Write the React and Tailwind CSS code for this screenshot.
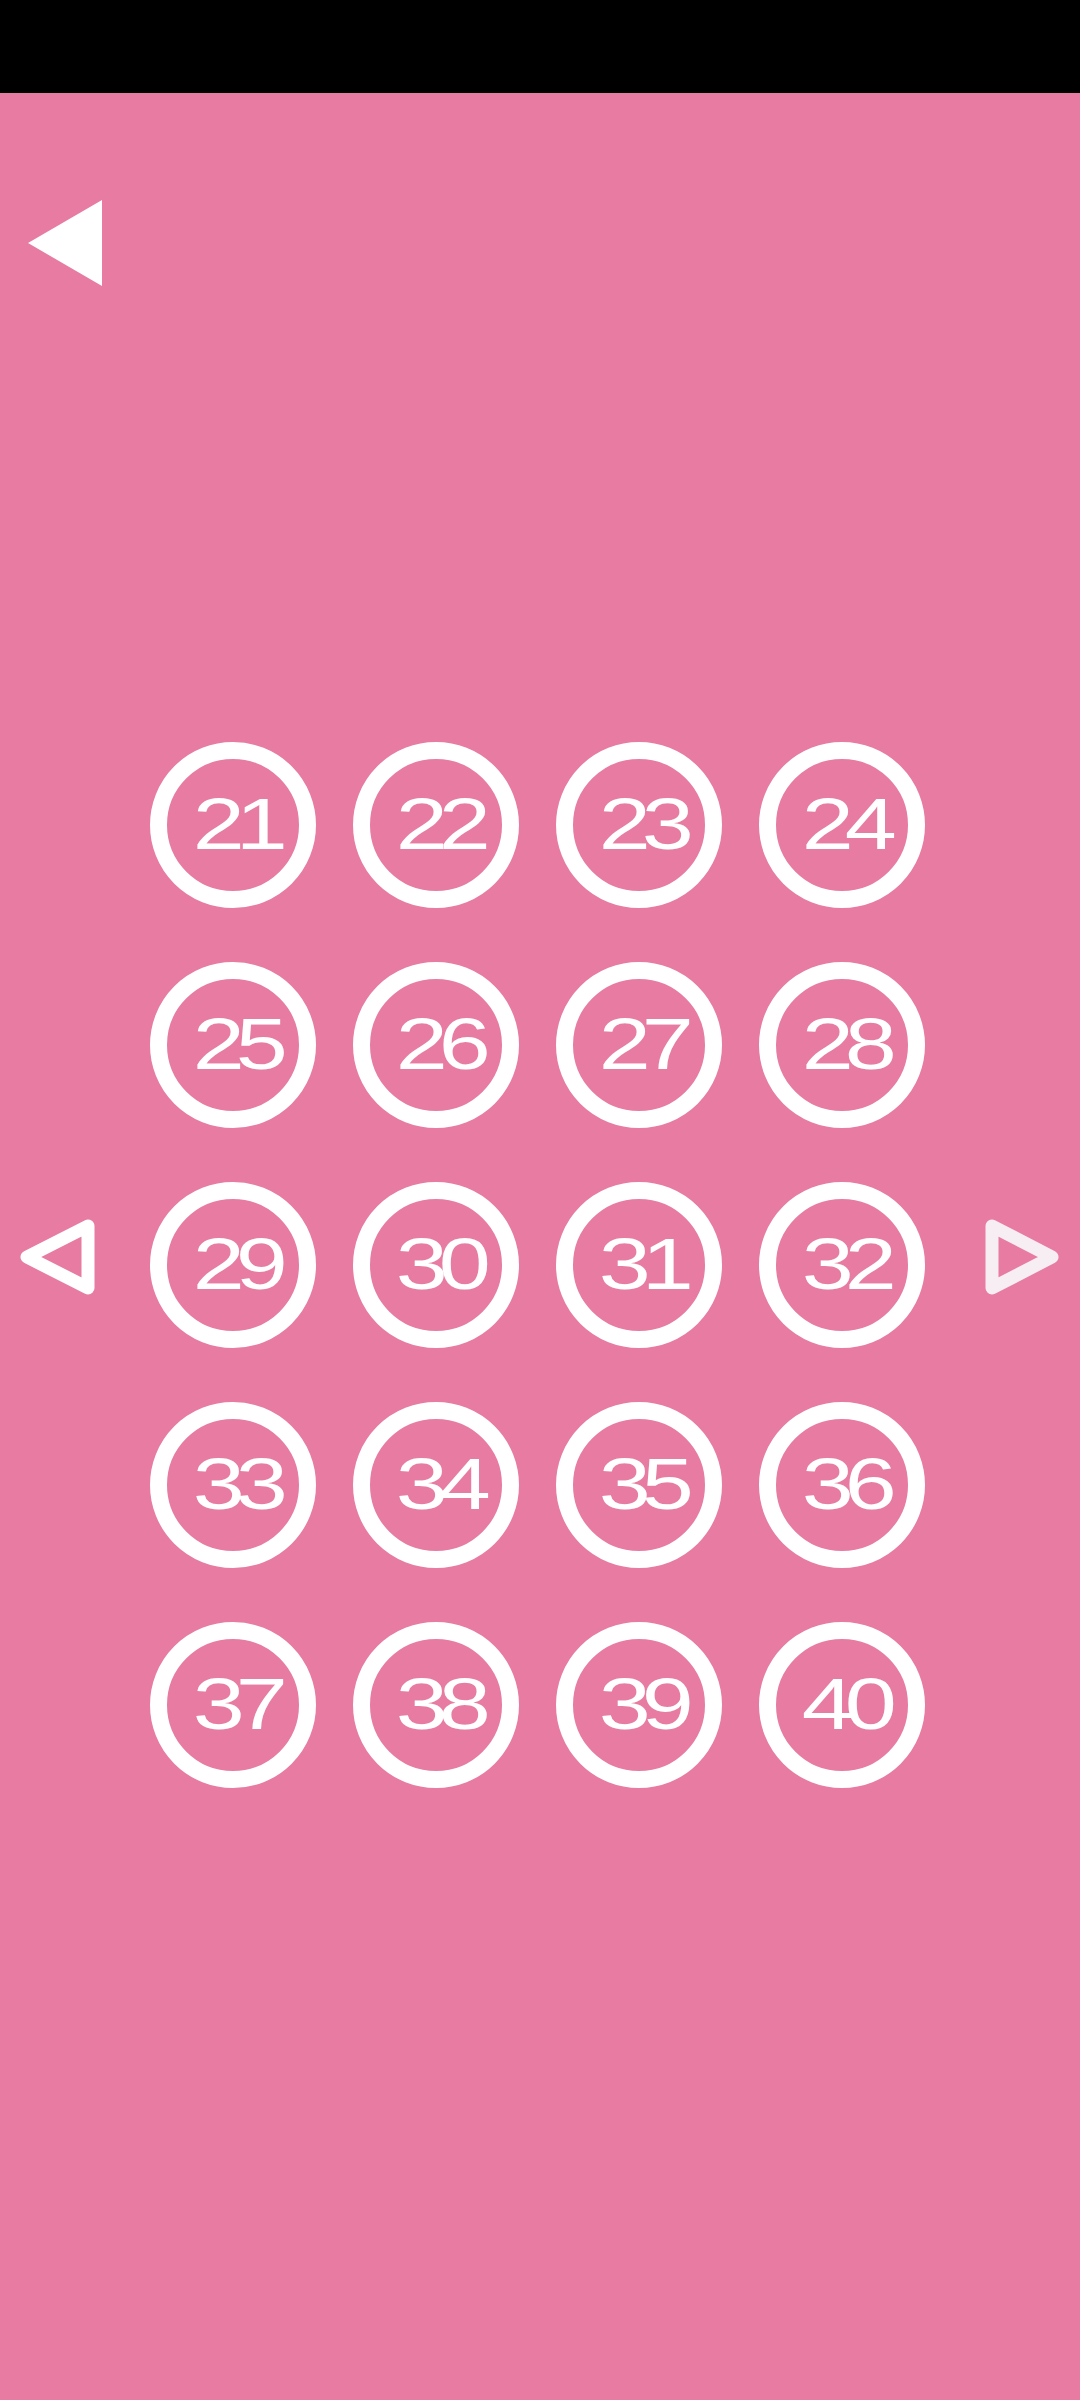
import React from 'react';

const LEVELS = Array.from({ length: 20 }, (_, i) => 21 + i);

function LevelButton({ n }) {
  return (
    <button className="w-[166px] h-[166px] rounded-full border-[17px] border-white flex items-center justify-center">
      <span className="block text-white text-[72px] leading-none tracking-[-7px] scale-x-[1.3] pl-[4px] -mt-[2px]">
        {n}
      </span>
    </button>
  );
}

export default function App() {
  return (
    <div className="w-[1080px] h-[2400px] bg-[#e77ba1] flex flex-col font-[family-name:Liberation_Sans,Arial,sans-serif]">
      {/* status bar */}
      <div className="h-[93px] bg-black shrink-0" />

      {/* back */}
      <div className="pt-[107px] pl-[28px]">
        <svg width="74" height="86" viewBox="0 0 74 86">
          <polygon points="0,43 74,0 74,86" fill="#ffffff" />
        </svg>
      </div>

      {/* level picker */}
      <div className="mt-[456px] flex items-center">
        <div className="pl-[18px] mb-[17px]">
          <svg width="80" height="80" viewBox="0 0 80 80">
            <polygon
              points="9,40 70,9 70,71"
              fill="none"
              stroke="#ffffff"
              strokeWidth="13"
              strokeLinejoin="round"
            />
          </svg>
        </div>

        <div className="ml-[52px] grid grid-cols-4 gap-x-[37px] gap-y-[54px]">
          {LEVELS.map(n => (
            <LevelButton key={n} n={n} />
          ))}
        </div>

        <div className="ml-[57px] mb-[17px]">
          <svg width="80" height="80" viewBox="0 0 80 80">
            <polygon
              points="10,9 10,71 70,40"
              fill="none"
              stroke="#f6eef2"
              strokeWidth="13"
              strokeLinejoin="round"
            />
          </svg>
        </div>
      </div>
    </div>
  );
}
